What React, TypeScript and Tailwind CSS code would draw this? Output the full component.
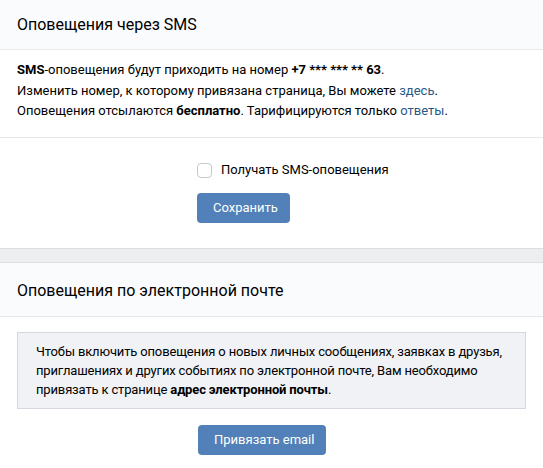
import React from "react";

const SectionHeader: React.FC<{ title: string; className?: string }> = ({ title, className = "" }) => (
  <div className={`bg-[#fafbfc] border-b border-[#e7e8ec] px-[17px] flex items-center ${className}`}>
    <h2 className="text-[16px] text-black font-normal">{title}</h2>
  </div>
);

const VkButton: React.FC<{ children: React.ReactNode; className?: string }> = ({ children, className = "" }) => (
  <button
    className={`h-[30px] px-4 rounded-[4px] bg-[#5181b8] text-white text-[13px] leading-[30px] whitespace-nowrap ${className}`}
  >
    {children}
  </button>
);

const App: React.FC = () => {
  return (
    <div
      className="w-[543px] h-[468px] bg-white text-black text-[13px] overflow-hidden"
      style={{ fontFamily: "Roboto, 'Open Sans', Arial, sans-serif" }}
    >
      {/* SMS */}
      <SectionHeader title="Оповещения через SMS" className="h-[50px]" />
      <div className="px-[17px] pt-[10px] pb-[15px] leading-[20.5px] border-b border-[#e7e8ec]">
        <p>
          <b>SMS</b>-оповещения будут приходить на номер <b>+7 *** *** ** 63</b>.
        </p>
        <p>
          Изменить номер, к которому привязана страница, Вы можете{" "}
          <a className="text-[#2a5885]">здесь</a>.
        </p>
        <p>
          Оповещения отсылаются <b>бесплатно</b>. Тарифицируются только{" "}
          <a className="text-[#2a5885]">ответы</a>.
        </p>
      </div>
      <div className="pl-[197px] pt-[25px] pb-[25px]">
        <label className="flex items-center gap-[9px] h-[15px]">
          <span className="w-[15px] h-[15px] rounded-[4px] border border-[#c1c9d1] bg-white" />
          <span className="text-[13px]">Получать SMS-оповещения</span>
        </label>
        <VkButton className="mt-[15px] w-[93px] px-0">Сохранить</VkButton>
      </div>

      {/* gap */}
      <div className="h-[15px] bg-[#edeef0] border-t border-b border-[#dcdee2]" />

      {/* Email */}
      <SectionHeader title="Оповещения по электронной почте" className="h-[54px] pt-[3px]" />
      <div className="px-[17px] pt-[15px]">
        <div className="bg-[#f0f2f5] border border-[#d3d9de] pl-[18px] pr-[8px] py-[9px] leading-[19px] tracking-[-0.15px]">
          Чтобы включить оповещения о новых личных сообщениях, заявках в друзья,
          <br />
          приглашениях и других событиях по электронной почте, Вам необходимо
          <br />
          привязать к странице <b>адрес электронной почты</b>.
        </div>
        <div className="pl-[181px] pt-[16px]">
          <VkButton className="w-[128px] px-0">Привязать email</VkButton>
        </div>
      </div>
    </div>
  );
};

export default App;
